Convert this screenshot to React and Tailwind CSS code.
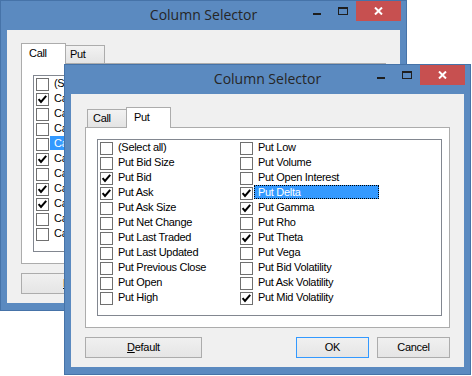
import React from "react";

const putLeft = [
  ["(Select all)", false],
  ["Put Bid Size", false],
  ["Put Bid", true],
  ["Put Ask", true],
  ["Put Ask Size", false],
  ["Put Net Change", false],
  ["Put Last Traded", false],
  ["Put Last Updated", false],
  ["Put Previous Close", false],
  ["Put Open", false],
  ["Put High", false],
];

const putRight = [
  ["Put Low", false],
  ["Put Volume", false],
  ["Put Open Interest", false],
  ["Put Delta", true, "focus"],
  ["Put Gamma", true],
  ["Put Rho", false],
  ["Put Theta", true],
  ["Put Vega", false],
  ["Put Bid Volatility", false],
  ["Put Ask Volatility", false],
  ["Put Mid Volatility", true],
];

// back window: only the left edge of its list shows
const callLeft = [
  ["(Select all)", false],
  ["Call Bid Size", true],
  ["Call Bid", false],
  ["Call Ask", false],
  ["Call Ask Size", false, "sel"],
  ["Call Net Change", true],
  ["Call Last Traded", false],
  ["Call Last Updated", true],
  ["Call Previous Close", true],
  ["Call Open", false],
  ["Call High", false],
];

function Check() {
  return (
    <svg width="11" height="11" viewBox="0 0 11 11">
      <path d="M1.6 5.2 L4 8 L9.2 1.8" fill="none" stroke="#000" strokeWidth="2" />
    </svg>
  );
}

function Row({ label, checked, state }) {
  let cls = "ml-[1px] -mt-[1px] h-[14px] w-[125px] whitespace-nowrap pl-[4px] leading-[14px]";
  if (state === "sel") cls = "ml-[1px] -mt-[1px] h-[14px] w-[125px] whitespace-nowrap bg-[#3399ff] pl-[4px] leading-[14px] text-white";
  if (state === "focus")
    cls = "ml-[1px] -mt-[1px] h-[14px] w-[125px] whitespace-nowrap border border-dotted border-black bg-[#3399ff] pl-[3px] leading-[12px] text-white";
  return (
    <div className="flex h-[15px] items-start">
      <div className="mt-[1px] flex h-[13px] w-[13px] shrink-0 items-center justify-center border border-[#707070] bg-white">
        {checked && <Check />}
      </div>
      <div className={cls}>{label}</div>
    </div>
  );
}

function Tab({ label, active }) {
  if (active) {
    return (
      <div className="relative z-10 -mx-[2px] -mb-[1px] h-[21px] w-[45px] border border-b-0 border-[#acacac] bg-white pl-[7px] leading-[19px]">
        {label}
      </div>
    );
  }
  return (
    <div className="h-[18px] w-[41px] border border-b-0 border-[#acacac] bg-linear-to-b from-[#f2f2f2] to-[#e4e4e4] pl-[5px] leading-[17px]">
      {label}
    </div>
  );
}

function Win({ pos, tab, left, right, covered }) {
  return (
    <div className={`absolute flex h-[311px] w-[407px] flex-col border border-[#4673a8] bg-[#5b8ac0] ${pos}`}>
      {/* title bar */}
      <div className="grid h-[29px] shrink-0 grid-cols-[1fr_auto_1fr]">
        <div />
        <div className="flex h-[26px] items-center font-['Open_Sans',sans-serif] text-[14px] text-[#262626]">
          Column Selector
        </div>
        <div className="flex items-start justify-end pr-[5px]">
          <div className="flex h-[20px] w-[26px] justify-center pt-[12px]">
            <div className="h-[2px] w-[8px] bg-[#1e1e1e]" />
          </div>
          <div className="flex h-[20px] w-[26px] justify-center pt-[6px]">
            <div className="h-[8px] w-[10px] border border-t-2 border-[#1e1e1e]" />
          </div>
          <div className="flex h-[20px] w-[45px] items-center justify-center bg-[#c75050]">
            <svg width="9" height="8" viewBox="0 0 9 8">
              <path d="M1 0.5 L8 7.5 M8 0.5 L1 7.5" stroke="#fff" strokeWidth="2" />
            </svg>
          </div>
        </div>
      </div>

      {/* client area */}
      <div className="mx-[6px] flex h-[273px] flex-col bg-[#f0f0f0] px-[14px] pt-[13px] font-['Liberation_Sans',Arial,sans-serif] text-[11px] tracking-[-0.3px] text-black">
        <div className="relative z-10 flex h-[20px] items-end pl-[2px]">
          <Tab label="Call" active={tab === "Call"} />
          <Tab label="Put" active={tab === "Put"} />
        </div>
        <div className="h-[201px] border border-[#acacac] bg-white p-[11px]">
          <div className="flex h-[177px] w-[345px] border border-[#828790] bg-white pl-[2px] pt-[1px]">
            <div className="flex w-[140px] flex-col">
              {left.map(([l, c, s]) => (
                <Row key={l} label={l} checked={c} state={s} />
              ))}
            </div>
            <div className="flex w-[140px] flex-col">
              {right.map(([l, c, s]) => (
                <Row key={l} label={l} checked={c} state={s} />
              ))}
            </div>
          </div>
        </div>
        <div className="mt-[9px] flex justify-between">
          <button className="h-[21px] w-[117px] border border-[#acacac] bg-linear-to-b from-[#f0f0f0] to-[#e5e5e5]">
            <span className="underline">D</span>efault
          </button>
          <div className="flex gap-[8px]">
            <button className="h-[21px] w-[73px] border border-[#3399ff] bg-linear-to-b from-[#f0f0f0] to-[#e5e5e5]">
              {covered ? "" : "OK"}
            </button>
            <button className="h-[21px] w-[73px] border border-[#acacac] bg-linear-to-b from-[#f0f0f0] to-[#e5e5e5]">
              {covered ? "" : "Cancel"}
            </button>
          </div>
        </div>
      </div>
    </div>
  );
}

export default function App() {
  return (
    <div className="relative h-[376px] w-[472px] overflow-hidden bg-white">
      <Win pos="left-0 top-0" tab="Call" left={callLeft} right={[]} covered />
      <Win pos="left-[64px] top-[64px]" tab="Put" left={putLeft} right={putRight} />
    </div>
  );
}
